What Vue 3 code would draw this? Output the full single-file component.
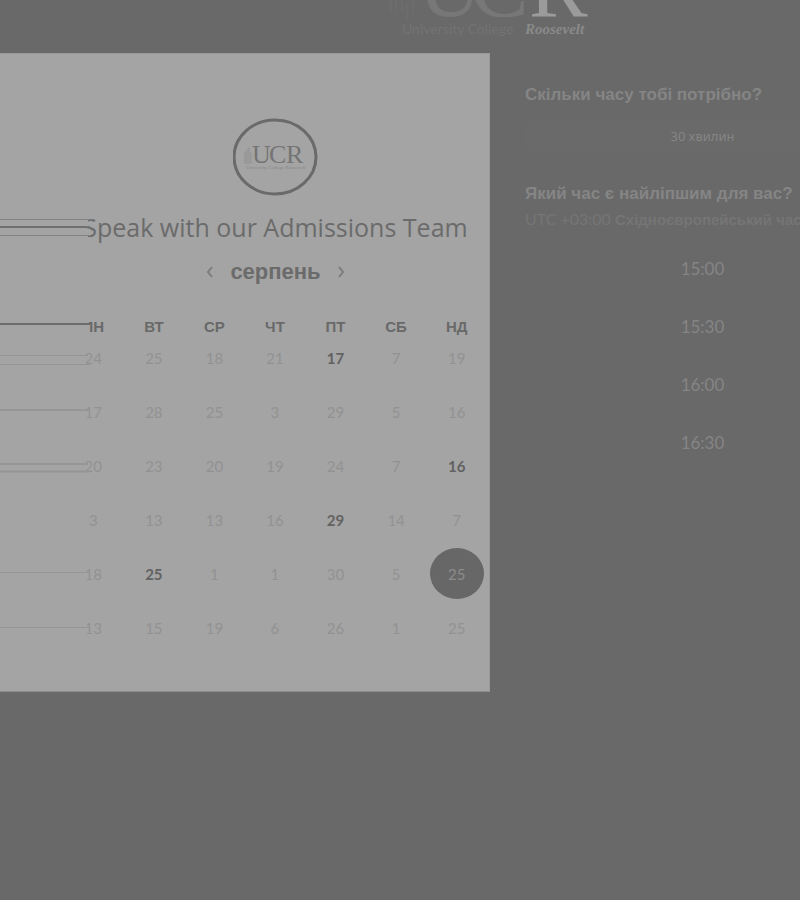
<script setup>
import { ref } from 'vue'

const weekdays = ['ПН', 'ВТ', 'СР', 'ЧТ', 'ПТ', 'СБ', 'НД']
const weeks = [
  [24, 25, 18, 21, 17, 7, 19],
  [17, 28, 25, 3, 29, 5, 16],
  [20, 23, 20, 19, 24, 7, 16],
  [3, 13, 13, 16, 29, 14, 7],
  [18, 25, 1, 1, 30, 5, 25],
  [13, 15, 19, 6, 26, 1, 25],
]
const available = ['0-4', '2-6', '3-4', '4-1']
const selected = ref('4-6')
const times = ['15:00', '15:30', '16:00', '16:30']
</script>

<template>
  <div class="page">
    <header class="top">
      <svg class="brand" viewBox="0 0 210 53" role="img" aria-label="UCR University College Roosevelt">
        <g fill="none" stroke="#707070" stroke-width="1">
          <path d="M6 0V12M11 0V14M17 0V11M22 4V20M28 0V14" />
        </g>
        <g class="brand-letters">
          <text x="33" y="16" fill="#777777">U</text>
          <text x="85" y="16" fill="#777777">C</text>
          <text x="144" y="16" fill="#9b9b9b">R</text>
        </g>
        <text class="brand-sub" x="17" y="34" fill="#737373">University College</text>
        <text class="brand-name" x="140" y="34" fill="#8a8a8a">Roosevelt</text>
      </svg>
    </header>

    <main class="columns">
      <section class="card">
        <svg class="crest" viewBox="0 0 86 78" role="img" aria-label="UCR">
          <ellipse cx="42" cy="39" rx="41" ry="37" fill="none" stroke="#6a6a6a" stroke-width="3" />
          <path d="M12 34V46M14 31V46M16 29V46M18 34V46" stroke="#8f8f8f" fill="none" />
          <g class="crest-letters" fill="#747474">
            <text x="19" y="45">U</text>
            <text x="36" y="45">C</text>
            <text x="53" y="45">R</text>
          </g>
          <text class="crest-sub" x="13" y="51" fill="#868686">University College Roosevelt</text>
        </svg>
        <h1 class="title">Speak with our Admissions Team</h1>
        <div class="month">
          <button type="button" class="arrow" aria-label="Попередній місяць">
            <svg viewBox="0 0 8 12"><path d="M6 1L2 6L6 11" /></svg>
          </button>
          <h2>серпень</h2>
          <button type="button" class="arrow" aria-label="Наступний місяць">
            <svg viewBox="0 0 8 12"><path d="M2 1L6 6L2 11" /></svg>
          </button>
        </div>
        <table class="calendar">
          <thead>
            <tr>
              <th v-for="day in weekdays" :key="day" scope="col">{{ day }}</th>
            </tr>
          </thead>
          <tbody>
            <tr v-for="(week, w) in weeks" :key="w">
              <td v-for="(date, d) in week" :key="d">
                <button
                  type="button"
                  class="date"
                  :class="{ open: available.includes(`${w}-${d}`), chosen: selected === `${w}-${d}` }"
                  @click="selected = `${w}-${d}`"
                ><span>{{ date }}</span></button>
              </td>
            </tr>
          </tbody>
        </table>

        <svg class="streaks" viewBox="0 0 94 600" aria-hidden="true">
          <g fill="#a4a4a4">
            <path d="M0 158H88V188H0ZM0 264H89V284H0ZM0 298H86V314H0ZM0 352H87V368H0ZM0 406H86V422H0ZM0 514H87V530H0ZM0 568H87V584H0Z" />
          </g>
          <g fill="none">
            <path d="M0 165.500H89Q92 165.500 93 168M0 181.500H91" stroke="#838383" stroke-width="1" />
            <path d="M0 173H86Q90 173 93 176" stroke="#707070" stroke-width="2" />
            <path d="M0 270H90" stroke="#6c6c6c" stroke-width="2" />
            <path d="M0 301.500H88M0 310.500H90" stroke="#949494" stroke-width="1" />
            <path d="M0 356H90M0 410H88M0 417.500H90" stroke="#969696" stroke-width="2" />
            <path d="M0 518.500H89M0 573.500H89" stroke="#969696" stroke-width="1" />
          </g>
        </svg>
      </section>

      <section class="options">
        <h3>Скільки часу тобі потрібно?</h3>
        <button type="button" class="duration">30 хвилин</button>
        <h3>Який час є найліпшим для вас?</h3>
        <p class="zone">UTC +03:00 <b>Східноєвропейський час</b></p>
        <ul class="times">
          <li v-for="time in times" :key="time">
            <button type="button">{{ time }}</button>
          </li>
        </ul>
      </section>
    </main>
  </div>
</template>

<style>
body {
  background: #696969;
}
</style>

<style scoped>
.page {
  min-height: 100vh;
  overflow: hidden;
  background: #696969;
  font-family: Lato, "Liberation Sans", sans-serif;
}
button {
  padding: 0;
  border: 0;
  background: none;
  color: inherit;
  font: inherit;
  cursor: pointer;
}
h1, h2, h3, p, ul {
  margin: 0;
  padding: 0;
}
.top {
  display: flex;
  justify-content: center;
  padding-left: 180px;
  height: 53px;
}
.brand {
  width: 210px;
  height: 53px;
}
.brand-letters {
  font: 88px "Liberation Serif", serif;
}
.brand-sub {
  font: 14px Lato, sans-serif;
}
.brand-name {
  font: italic bold 15px "Liberation Serif", serif;
}
.columns {
  display: grid;
  grid-template-columns: 49fr 31fr;
  align-items: start;
}
.card {
  position: relative;
  box-sizing: border-box;
  min-width: 0;
  padding: 64px 0 23px 62px;
  border: 1px solid #999999;
  border-left: 0;
  border-bottom-color: #8c8c8c;
  background: #a4a4a4;
}
.crest {
  display: block;
  width: 86px;
  height: 78px;
  margin: 0 auto;
}
.crest-letters {
  font: 26px "Liberation Serif", serif;
}
.crest-sub {
  font: 5px "Liberation Serif", serif;
}
.title {
  margin-top: 15px;
  color: #6b6b6b;
  font-family: "Open Sans", sans-serif;
  font-size: 25px;
  font-weight: 400;
  line-height: 32px;
  text-align: center;
  white-space: nowrap;
}
.month {
  display: flex;
  align-items: center;
  justify-content: center;
  gap: 16px;
  margin-top: 15px;
  color: #6b6b6b;
}
.month h2 {
  font: bold 22px/28px "Liberation Sans", sans-serif;
}
.arrow svg {
  display: block;
  width: 8px;
  height: 12px;
  fill: none;
  stroke: #7c7c7c;
  stroke-width: 2;
}
.calendar {
  width: calc(100% - 3px);
  margin: 24px 0 0 1px;
  border-collapse: collapse;
  table-layout: fixed;
}
th {
  height: 34px;
  padding: 0;
  color: #696969;
  font: bold 15px/34px "Liberation Sans", sans-serif;
}
td {
  height: 54px;
  padding: 0;
  text-align: center;
  vertical-align: top;
}
.date {
  position: relative;
  width: 100%;
  height: 28px;
  color: #929292;
  font-size: 15px;
  line-height: 28px;
}
.date span {
  position: relative;
}
.date.open {
  color: #626262;
  font-weight: 700;
}
.date.chosen {
  color: #8c8c8c;
}
.date.chosen::before {
  position: absolute;
  top: -12px;
  left: calc(50% - 27px);
  width: 54px;
  height: 51px;
  border-radius: 50%;
  background: #676767;
  content: "";
}
.streaks {
  position: absolute;
  top: 0;
  left: 0;
  width: 94px;
  height: 600px;
  pointer-events: none;
}
.options {
  margin-right: -80px;
  padding: 29px 0 0 35px;
  color: #858585;
  white-space: nowrap;
}
.options h3 {
  font: bold 17px/26px "Liberation Sans", sans-serif;
}
.duration {
  display: block;
  width: 100%;
  height: 32px;
  margin: 12px 0 29px;
  border-radius: 4px;
  background: #6a6a6a;
  font: 13px/32px "Noto Sans", sans-serif;
}
.zone {
  color: #757575;
  font-size: 16px;
  line-height: 24px;
}
.zone b {
  font: bold 15px/24px "Liberation Sans", sans-serif;
}
.times {
  display: grid;
  gap: 18px;
  margin-top: 17px;
  list-style: none;
}
.times button {
  display: block;
  width: 100%;
  height: 40px;
  font-size: 17px;
  line-height: 40px;
}
</style>
